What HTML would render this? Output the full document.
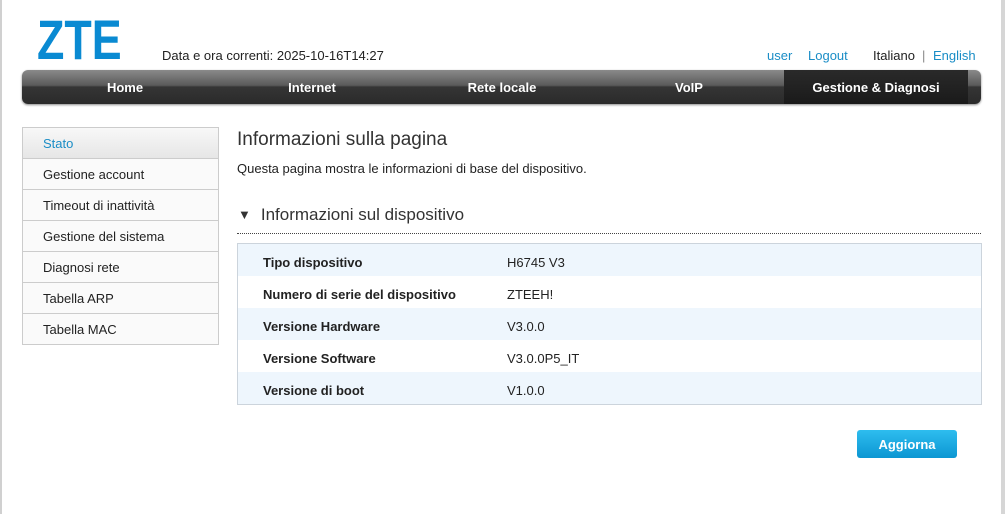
<!DOCTYPE html>
<html><head><meta charset="utf-8"><style>
*{margin:0;padding:0;box-sizing:border-box}
body{width:1005px;height:514px;background:#fff;font-family:"Liberation Sans","Noto Sans CJK SC",sans-serif;font-size:13px;color:#222;position:relative;overflow:hidden}
.lb{position:absolute;left:0;top:0;width:2px;height:514px;background:#d0d0d0}
.rb{position:absolute;left:1001px;top:0;width:4px;height:514px;background:#d6d6d6}
.logo{position:absolute;left:37px;top:12px;font-size:56px;font-weight:bold;color:#0a8ad2;letter-spacing:0;transform:scaleX(0.8);transform-origin:left;line-height:56px}
.date{position:absolute;left:162px;top:48px;font-size:13px}
.top{position:absolute;top:48px;font-size:13px;color:#1a8dc6}
.nav{position:absolute;left:22px;top:70px;width:959px;height:34px;border-radius:6px;background:linear-gradient(#8a8a8a 0,#5a5a5a 45%,#353535 50%,#2a2a2a 100%);box-shadow:0 1px 2px #888;overflow:hidden}
.nav div{position:absolute;top:1px;height:34px;line-height:34px;color:#fff;font-weight:bold;font-size:13px;text-align:center}
.nav div.act{top:0;line-height:36px}
.act{background:linear-gradient(#2a2a2a,#1a1a1a)}
.side{position:absolute;left:22px;top:127px;width:197px;border:1px solid #ccc;border-bottom:none}
.side div{height:31px;line-height:31px;padding-left:20px;border-bottom:1px solid #ccc;background:#fafafa;font-size:13px}
.side div.s{background:linear-gradient(#f8f8f8,#e6e6e6);color:#1a8dc6}
h1{position:absolute;left:237px;top:129px;font-size:19px;font-weight:normal;color:#333}
.desc{position:absolute;left:237px;top:161px;font-size:13px}
h2{position:absolute;left:238px;top:205px;font-size:17px;font-weight:normal;color:#333}
.dot{position:absolute;left:237px;top:233px;width:744px;border-top:1px dotted #444}
.tbl{position:absolute;left:237px;top:243px;width:745px;height:162px;border:1px solid #ccd4dc}
.tbl div{height:32px;line-height:37px;position:relative}
.tbl div:nth-child(odd){background:#eef6fd}
.tbl b{position:absolute;left:25px;font-size:13px}
.tbl span{position:absolute;left:269px;font-size:13px}
.btn{position:absolute;left:857px;top:430px;width:100px;height:28px;border-radius:3px;background:linear-gradient(#2ebdef,#0c96d2);color:#fff;font-weight:bold;text-align:center;line-height:29px;font-size:13px}
</style></head><body>
<div class="lb"></div><div class="rb"></div>
<div class="logo">ZTE</div>
<div class="date">Data e ora correnti: 2025-10-16T14:27</div>
<div class="top" style="left:767px">user</div>
<div class="top" style="left:808px">Logout</div>
<div class="top" style="left:873px;color:#222">Italiano</div>
<div class="top" style="left:922px;color:#888">|</div>
<div class="top" style="left:933px">English</div>
<div class="nav">
<div style="left:0;width:206px">Home</div>
<div style="left:190px;width:200px">Internet</div>
<div style="left:380px;width:200px">Rete locale</div>
<div style="left:567px;width:200px">VoIP</div>
<div class="act" style="left:762px;width:184px">Gestione &amp; Diagnosi</div>
</div>
<div class="side">
<div class="s">Stato</div><div>Gestione account</div><div>Timeout di inattività</div><div>Gestione del sistema</div><div>Diagnosi rete</div><div>Tabella ARP</div><div>Tabella MAC</div>
</div>
<h1>Informazioni sulla pagina</h1>
<div class="desc">Questa pagina mostra le informazioni di base del dispositivo.</div>
<h2><span style="font-size:13px;margin-right:10px;position:relative;top:-1px">▼</span>Informazioni sul dispositivo</h2>
<div class="dot"></div>
<div class="tbl">
<div><b>Tipo dispositivo</b><span>H6745 V3</span></div>
<div><b>Numero di serie del dispositivo</b><span>ZTEEH!</span></div>
<div><b>Versione Hardware</b><span>V3.0.0</span></div>
<div><b>Versione Software</b><span>V3.0.0P5_IT</span></div>
<div><b>Versione di boot</b><span>V1.0.0</span></div>
</div>
<div class="btn">Aggiorna</div>
</body></html>
